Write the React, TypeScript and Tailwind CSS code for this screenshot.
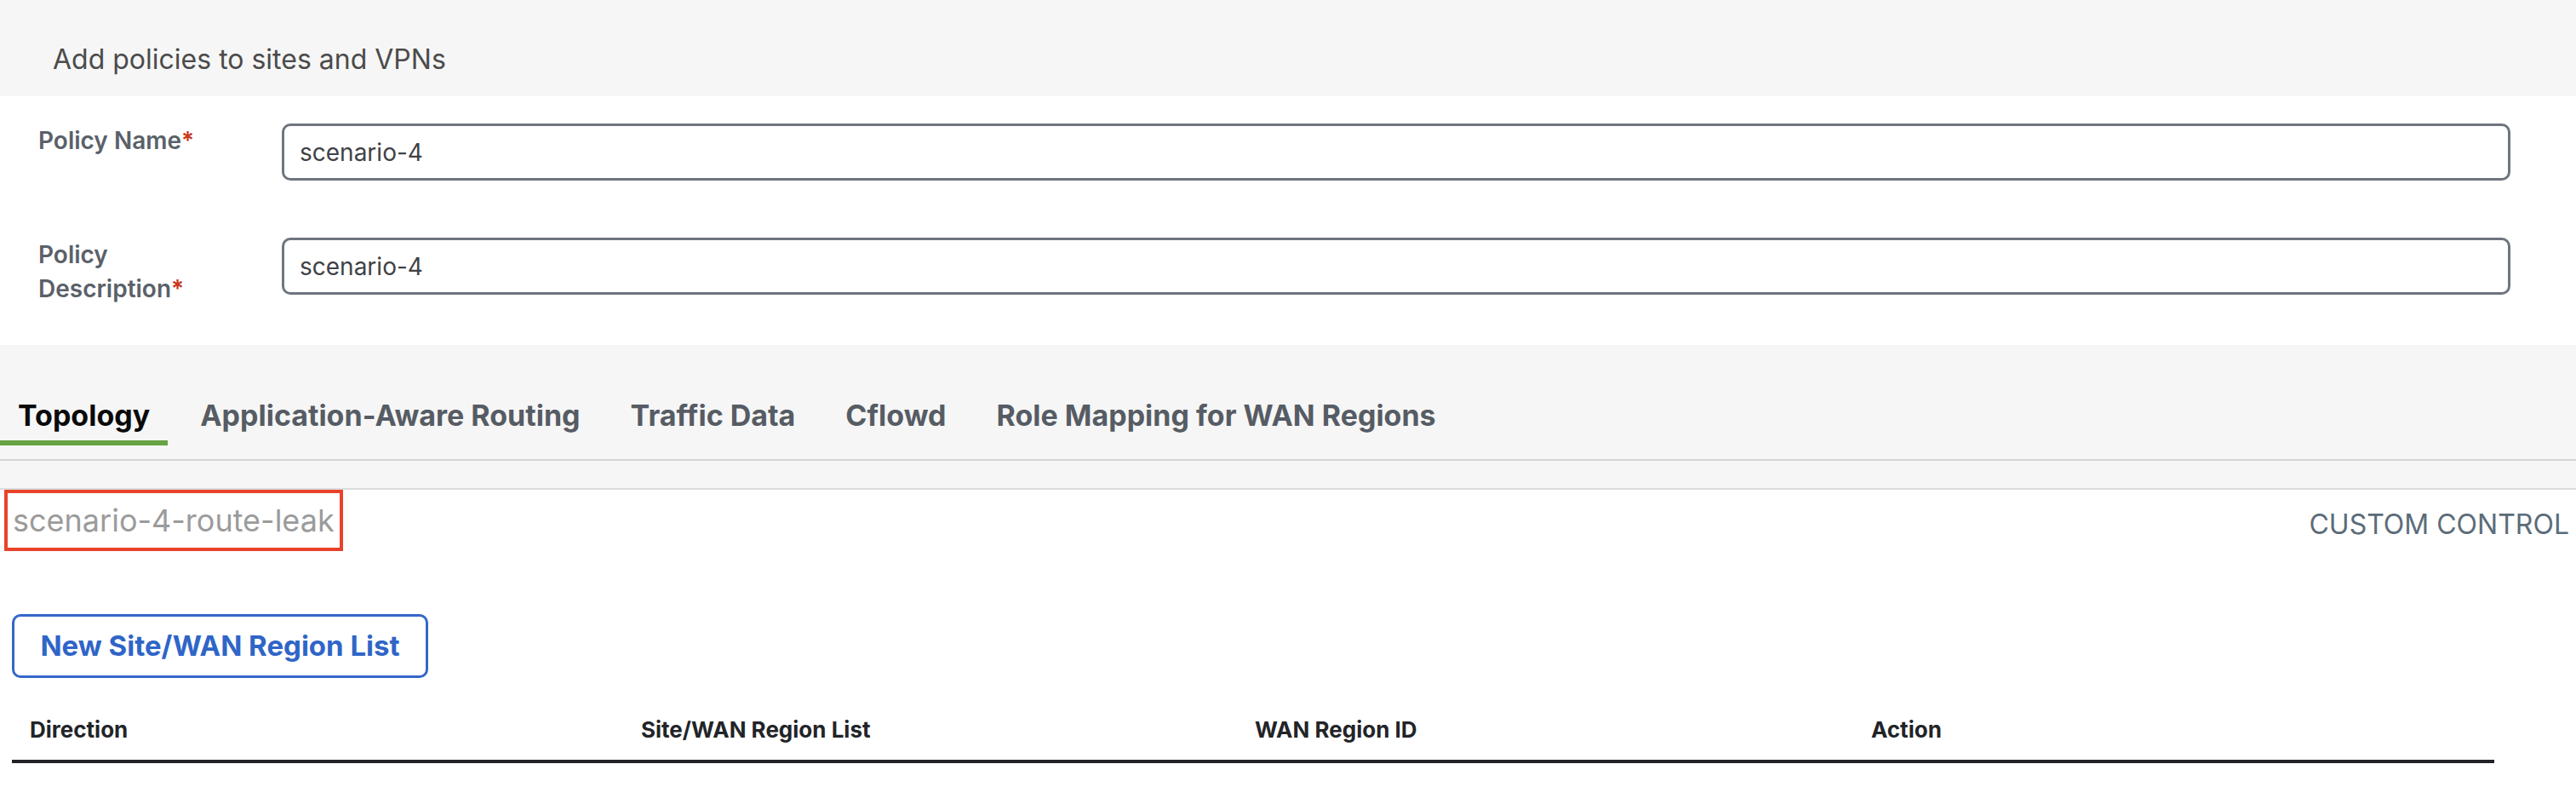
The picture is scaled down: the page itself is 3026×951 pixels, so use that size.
import React from 'react'

const tabs = [
  'Topology',
  'Application-Aware Routing',
  'Traffic Data',
  'Cflowd',
  'Role Mapping for WAN Regions',
]

const columns = [
  { label: 'Direction', width: 'w-[718px]' },
  { label: 'Site/WAN Region List', width: 'w-[721px]' },
  { label: 'WAN Region ID', width: 'w-[724px]' },
  { label: 'Action', width: 'flex-1' },
]

const FormRow: React.FC<{ label: React.ReactNode; value: string }> = ({ label, value }) => (
  <div className="flex items-start">
    <div className="w-[331px] shrink-0 pl-[45px]">
      <div className="w-[200px] text-[28px] leading-[40px] font-semibold text-[#5a6169]">
        {label}
        <span className="text-[#c8381e]">*</span>
      </div>
    </div>
    <div className="flex-1 h-[67px] border-[3px] border-[#6e757e] rounded-[10px] bg-white flex items-center pl-[18px]">
      <span className="text-[28px] text-[#3f4246]">{value}</span>
    </div>
  </div>
)

const App: React.FC = () => {
  return (
    <div className="w-[3026px] min-h-[951px] bg-white font-['Inter',sans-serif]">
      {/* page title */}
      <div className="bg-[#f6f6f6] pt-[50px] pb-[23px] pl-[62px]">
        <h1 className="text-[32px] leading-[40px] text-[#4b4b4b]">Add policies to sites and VPNs</h1>
      </div>

      {/* policy name / description */}
      <div className="pt-[32px] pb-[46px] pr-[77px] flex flex-col gap-[67px]">
        <FormRow label="Policy Name" value="scenario-4" />
        <FormRow
          label={
            <>
              Policy
              <br />
              Description
            </>
          }
          value="scenario-4"
        />
      </div>

      {/* tabs */}
      <div className="bg-[#f6f6f6]">
        <div className="flex gap-[17px] pt-[63px] pb-[16px] border-b-2 border-[#d5d5d8]">
          {tabs.map((t, i) => (
            <div
              key={t}
              className={
                i === 0
                  ? 'px-[21px] pb-[9px] border-b-[6px] border-[#68a344] text-[34px] leading-[40px] font-bold text-[#0a0a0a]'
                  : 'px-[21px] pb-[9px] border-b-[6px] border-transparent text-[34px] leading-[40px] font-bold text-[#565c64]'
              }
            >
              {t}
            </div>
          ))}
        </div>
        <div className="h-[34px] border-b-2 border-[#dcdcdc]" />
      </div>

      {/* policy block */}
      <div className="flex justify-between items-start">
        <div className="ml-[5px] border-4 border-[#e8432a] pl-[6px] pr-[6px] pt-[10px] pb-[10px]">
          <span className="block text-[36px] leading-[44px] text-[#9b9b9b]">scenario-4-route-leak</span>
        </div>
        <div className="pt-[21px] pr-[8px] text-[32px] leading-[40px] text-[#5b6c79]">CUSTOM CONTROL</div>
      </div>

      <div className="pl-[14px] pt-[74px]">
        <button className="h-[75px] w-[489px] border-[3px] border-[#3467c9] rounded-[10px] bg-white text-[33px] font-bold text-[#2f65c7]">
          New Site/WAN Region List
        </button>
      </div>

      <div className="ml-[14px] w-[2916px] mt-[45px] flex pb-[19px] border-b-4 border-[#212327]">
        {columns.map((c) => (
          <div key={c.label} className={`${c.width} pl-[21px] text-[26px] leading-[32px] font-bold text-[#222428]`}>
            {c.label}
          </div>
        ))}
      </div>
    </div>
  )
}

export default App
